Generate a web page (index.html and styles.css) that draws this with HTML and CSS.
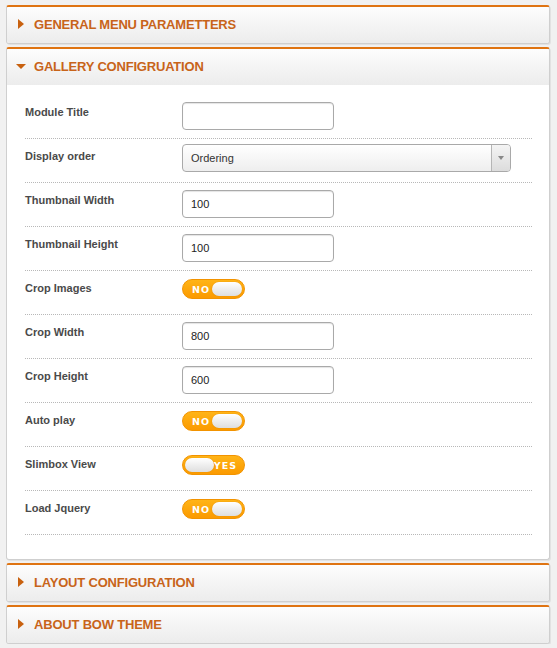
FILE: index.html
```html
<!DOCTYPE html>
<html>
<head>
<meta charset="utf-8">
<link rel="stylesheet" href="styles.css">
</head>
<body>
<div class="page">
  <div class="panel">
    <div class="panel-head"><span class="tri tri-right"></span><span class="title">GENERAL MENU PARAMETTERS</span></div>
  </div>
  <div class="panel">
    <div class="panel-head open"><span class="tri tri-down"></span><span class="title">GALLERY CONFIGRUATION</span></div>
    <div class="panel-body">
      <div class="row"><label class="lbl">Module Title</label><div class="field"><input class="txt" type="text" value=""></div></div>
      <div class="row"><label class="lbl">Display order</label><div class="field"><div class="select"><span class="sel-val">Ordering</span><span class="sel-btn"><span class="sel-arrow"></span></span></div></div></div>
      <div class="row"><label class="lbl">Thumbnail Width</label><div class="field"><input class="txt" type="text" value="100"></div></div>
      <div class="row"><label class="lbl">Thumbnail Height</label><div class="field"><input class="txt" type="text" value="100"></div></div>
      <div class="row"><label class="lbl">Crop Images</label><div class="field"><span class="toggle off"><span class="tg-text">NO</span><span class="knob"></span></span></div></div>
      <div class="row"><label class="lbl">Crop Width</label><div class="field"><input class="txt" type="text" value="800"></div></div>
      <div class="row"><label class="lbl">Crop Height</label><div class="field"><input class="txt" type="text" value="600"></div></div>
      <div class="row"><label class="lbl">Auto play</label><div class="field"><span class="toggle off"><span class="tg-text">NO</span><span class="knob"></span></span></div></div>
      <div class="row"><label class="lbl">Slimbox View</label><div class="field"><span class="toggle on"><span class="knob"></span><span class="tg-text">YES</span></span></div></div>
      <div class="row"><label class="lbl">Load Jquery</label><div class="field"><span class="toggle off"><span class="tg-text">NO</span><span class="knob"></span></span></div></div>
    </div>
  </div>
  <div class="panel">
    <div class="panel-head"><span class="tri tri-right"></span><span class="title">LAYOUT CONFIGURATION</span></div>
  </div>
  <div class="panel">
    <div class="panel-head"><span class="tri tri-right"></span><span class="title">ABOUT BOW THEME</span></div>
  </div>
</div>
</body>
</html>
```
FILE: styles.css
```css
html, body {
  margin: 0;
  padding: 0;
  background: #f1f1f1;
}
body {
  font-family: "Liberation Sans", Arial, sans-serif;
}
.page {
  width: 544px;
  padding: 5px 0 0 6px;
  display: flex;
  flex-direction: column;
  gap: 3px;
}
.panel {
  border: 1px solid #cfcfcf;
  border-top: 2px solid #df7412;
  border-radius: 3px;
  background: #fff;
  box-shadow: 1px 1px 0 #e2e2e2;
  overflow: hidden;
}
.panel-head {
  height: 36px;
  display: flex;
  align-items: center;
  background: linear-gradient(#fdfdfd, #ececec);
  padding-left: 11px;
  padding-bottom: 2px;
  box-sizing: border-box;
}
.tri {
  display: inline-block;
  width: 0;
  height: 0;
}
.tri-right {
  border-top: 5px solid transparent;
  border-bottom: 5px solid transparent;
  border-left: 6px solid #c8610f;
  margin-right: 10px;
}
.tri-down {
  border-left: 5px solid transparent;
  border-right: 5px solid transparent;
  border-top: 5px solid #c8610f;
  margin-left: -2px;
  margin-right: 8px;
}
.title {
  color: #c8641a;
  font-weight: bold;
  font-size: 13px;
  letter-spacing: -0.2px;
}
.panel-body {
  padding: 10px 17px 24px 18px;
}
.row {
  display: flex;
  align-items: center;
  height: 43px;
  border-bottom: 1px dotted #b8b8b8;
}
.lbl {
  width: 157px;
  flex: none;
  font-size: 11px;
  font-weight: bold;
  color: #4a4a4a;
  padding-bottom: 10px;
}
.field {
  flex: 1;
  display: flex;
  align-items: center;
  padding-bottom: 1px;
}
.txt {
  width: 152px;
  height: 28px;
  box-sizing: border-box;
  border: 1px solid #a9a9a9;
  border-radius: 4px;
  padding: 0 8px;
  font-family: "Liberation Sans", Arial, sans-serif;
  font-size: 11px;
  color: #222;
  background: #fff;
  box-shadow: inset 0 1px 1px #e4e4e4;
  margin: 0;
  outline: none;
}
.select {
  width: 329px;
  height: 28px;
  box-sizing: border-box;
  border: 1px solid #a9a9a9;
  border-radius: 4px;
  display: flex;
  background: linear-gradient(#ffffff, #eeeeee);
  overflow: hidden;
  margin-bottom: 5px;
}
.sel-val {
  flex: 1;
  display: flex;
  align-items: center;
  padding-left: 8px;
  font-size: 11px;
  color: #333;
}
.sel-btn {
  width: 18px;
  border-left: 1px solid #b5b5b5;
  background: linear-gradient(#f4f4f4, #dcdcdc);
  display: flex;
  align-items: center;
  justify-content: center;
}
.sel-arrow {
  width: 0;
  height: 0;
  border-left: 3px solid transparent;
  border-right: 3px solid transparent;
  border-top: 4px solid #888;
}
.toggle {
  width: 63px;
  height: 20px;
  box-sizing: border-box;
  border-radius: 10px;
  background: linear-gradient(#ffb417, #fb9a00);
  border: 1px solid #f29300;
  display: flex;
  align-items: center;
  justify-content: space-between;
  padding: 0 2px 0 9px;
  margin-bottom: 6px;
}
.toggle.on {
  padding: 0 7px 0 2px;
}
.tg-text {
  color: #fff;
  font-size: 9.5px;
  font-weight: bold;
  letter-spacing: 1px;
  font-family: "DejaVu Sans", sans-serif;
}
.knob {
  width: 30px;
  height: 14px;
  border-radius: 7px;
  background: linear-gradient(#ffffff, #dedede);
  box-shadow: 0 0 1px #c77800;
}
```
